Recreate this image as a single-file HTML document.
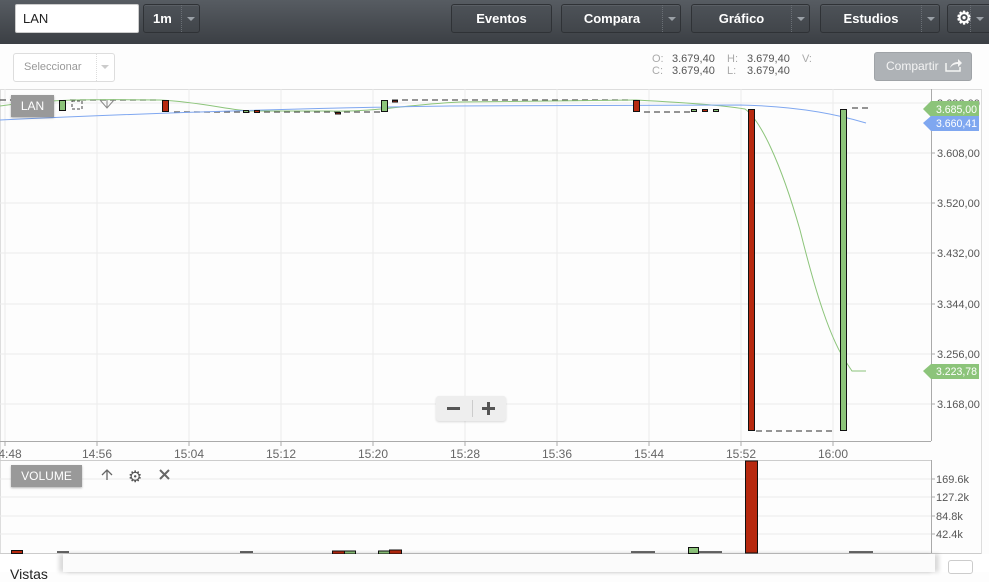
<!DOCTYPE html>
<html><head><meta charset="utf-8">
<style>
*{margin:0;padding:0;box-sizing:border-box}
body{width:989px;height:572px;overflow:hidden;background:#fdfdfd;font-family:"Liberation Sans",sans-serif;position:relative}
.hdr{position:absolute;left:0;top:0;width:989px;height:44px;background:linear-gradient(#575c62,#3b3f44)}
.btn{position:absolute;top:4px;height:29px;border:1px solid #2f3236;border-radius:3px;background:linear-gradient(#4d5258,#41454a);color:#fff;font-weight:bold;font-size:13px;line-height:27px;text-align:center;box-shadow:inset 0 1px 0 rgba(255,255,255,.08)}
.dd{position:absolute;right:0;top:0;width:18px;height:27px;border-left:1px dotted #6a6f75}
.dd:after{content:"";position:absolute;left:5px;top:12px;border:4px solid transparent;border-top:4px solid #9aa0a6}
.inp{position:absolute;left:15px;top:4px;width:124px;height:29px;background:#fff;border:1px solid #ccc;border-radius:2px;font-size:13px;line-height:27px;padding-left:7px;color:#222}
.sel{position:absolute;left:13px;top:53px;width:102px;height:29px;border:1px solid #ddd;border-radius:3px;background:#fff;color:#999;font-size:11px;line-height:27px;padding-left:10px}
.ohlc{position:absolute;left:652px;top:53px;font-size:11px;color:#555;line-height:12px}
.ohlc b{font-weight:normal;color:#aaa;display:inline-block}
.share{position:absolute;left:874px;top:52px;width:98px;height:29px;background:#aeb2b6;border:1px solid #9fa3a7;border-radius:3px;color:#f4f4f4;font-size:12px;line-height:27px;padding-left:11px}
.tag{position:absolute;background:#999;color:#fff;font-size:12px;}
</style></head><body>
<div class="hdr"></div>
<div class="inp">LAN</div>
<div class="btn" style="left:143px;width:57px;text-align:left;padding-left:9px">1m<div class="dd"></div></div>
<div class="btn" style="left:451px;width:101px">Eventos</div>
<div class="btn" style="left:561px;width:120px;padding-right:18px">Compara<div class="dd"></div></div>
<div class="btn" style="left:691px;width:119px;padding-right:18px">Gráfico<div class="dd"></div></div>
<div class="btn" style="left:820px;width:120px;padding-right:18px">Estudios<div class="dd"></div></div>
<div class="btn" style="left:947px;width:50px;text-align:left;padding-left:8px;font-size:18px">⚙<div class="dd" style="right:8px"></div></div>

<div class="sel">Seleccionar<div style="position:absolute;right:0;top:0;width:18px;height:27px;border-left:1px dotted #ddd"><div style="position:absolute;left:4px;top:11px;border:4px solid transparent;border-top:4px solid #ccc"></div></div></div>
<div class="ohlc"><b style="width:20px">O:</b><span style="display:inline-block;width:55px">3.679,40</span><b style="width:20px">H:</b><span style="display:inline-block;width:55px">3.679,40</span><b>V:</b><br><b style="width:20px">C:</b><span style="display:inline-block;width:55px">3.679,40</span><b style="width:20px">L:</b><span>3.679,40</span></div>
<div class="share">Compartir <svg width="18" height="14" style="vertical-align:-2px;margin-left:3px"><path d="M1 5V13H15V9" stroke="#f4f4f4" stroke-width="1.5" fill="none"/><path d="M5 10C6 6 9 4 13 4V1L17 5L13 9V6C10 6 7 7 5 10Z" fill="#f4f4f4"/></svg></div>

<svg style="position:absolute;left:0;top:0" width="989" height="572">
<g stroke="#ececec" stroke-width="1">
<rect x="0.5" y="89.5" width="981" height="464" fill="none" stroke="#ddd"/>
<line x1="5" y1="89" x2="5" y2="441"/><line x1="97" y1="89" x2="97" y2="441"/><line x1="189" y1="89" x2="189" y2="441"/><line x1="281" y1="89" x2="281" y2="441"/><line x1="373" y1="89" x2="373" y2="441"/><line x1="465" y1="89" x2="465" y2="441"/><line x1="557" y1="89" x2="557" y2="441"/><line x1="649" y1="89" x2="649" y2="441"/><line x1="741" y1="89" x2="741" y2="441"/><line x1="833" y1="89" x2="833" y2="441"/>
<line x1="0" y1="103" x2="931" y2="103"/><line x1="0" y1="153" x2="931" y2="153"/><line x1="0" y1="203" x2="931" y2="203"/><line x1="0" y1="253" x2="931" y2="253"/><line x1="0" y1="304" x2="931" y2="304"/><line x1="0" y1="354" x2="931" y2="354"/><line x1="0" y1="404" x2="931" y2="404"/>
<line x1="0" y1="479" x2="931" y2="479"/><line x1="0" y1="497" x2="931" y2="497"/><line x1="0" y1="516" x2="931" y2="516"/><line x1="0" y1="534" x2="931" y2="534"/>
</g>
<line x1="931.5" y1="89" x2="931.5" y2="441" stroke="#aaa"/>
<line x1="0" y1="441.5" x2="931" y2="441.5" stroke="#aaa"/>
<line x1="0" y1="460.5" x2="931" y2="460.5" stroke="#ccc"/>
<line x1="931.5" y1="460" x2="931.5" y2="553" stroke="#aaa"/>
<line x1="0" y1="553.5" x2="981" y2="553.5" stroke="#ccc"/>
<g stroke="#aaa"><line x1="5" y1="441" x2="5" y2="446"/><line x1="97" y1="441" x2="97" y2="446"/><line x1="189" y1="441" x2="189" y2="446"/><line x1="281" y1="441" x2="281" y2="446"/><line x1="373" y1="441" x2="373" y2="446"/><line x1="465" y1="441" x2="465" y2="446"/><line x1="557" y1="441" x2="557" y2="446"/><line x1="649" y1="441" x2="649" y2="446"/><line x1="741" y1="441" x2="741" y2="446"/><line x1="833" y1="441" x2="833" y2="446"/>
<line x1="931" y1="153" x2="935" y2="153"/><line x1="931" y1="203" x2="935" y2="203"/><line x1="931" y1="253" x2="935" y2="253"/><line x1="931" y1="304" x2="935" y2="304"/><line x1="931" y1="354" x2="935" y2="354"/><line x1="931" y1="404" x2="935" y2="404"/>
<line x1="931" y1="479" x2="935" y2="479"/><line x1="931" y1="497" x2="935" y2="497"/><line x1="931" y1="516" x2="935" y2="516"/><line x1="931" y1="534" x2="935" y2="534"/></g>
<g font-size="11" fill="#555" font-family="Liberation Sans">
<text x="937" y="107">3.696,00</text><text x="937" y="157">3.608,00</text><text x="937" y="207">3.520,00</text><text x="937" y="257">3.432,00</text><text x="937" y="308">3.344,00</text><text x="937" y="358">3.256,00</text><text x="937" y="408">3.168,00</text>
<text x="936" y="483">169.6k</text><text x="936" y="501">127.2k</text><text x="936" y="520">84.8k</text><text x="936" y="538">42.4k</text>
<g font-size="12" fill="#666" text-anchor="middle"><text x="10" y="458">4:48</text><text x="97" y="458">14:56</text><text x="189" y="458">15:04</text><text x="281" y="458">15:12</text><text x="373" y="458">15:20</text><text x="465" y="458">15:28</text><text x="557" y="458">15:36</text><text x="649" y="458">15:44</text><text x="741" y="458">15:52</text><text x="833" y="458">16:00</text></g>
</g>
<g stroke="#555" stroke-dasharray="6,4" stroke-width="1.3" fill="none">
<path d="M0 100H14M70 100H160M392 100H632"/><path d="M174 112H380M644 112H690M756 431H836M852 108H870"/>
</g>
<path d="M0 106 C40 100 80 99 160 100 C200 102 230 110 250 111 L330 111 C380 112 400 105 460 102 L636 100 C690 103 720 105 745 109 C760 120 780 160 800 230 C815 290 830 340 848 365 L852 371 H866" stroke="#8cc47a" fill="none" stroke-width="1"/>
<path d="M0 120 C150 113 300 108 450 106 L740 105 C790 106 830 112 866 123" stroke="#7fa7f0" fill="none" stroke-width="1"/>
<g stroke="#111" stroke-width="1">
<rect x="59.5" y="100.5" width="6" height="10" fill="#8cc47a"/>
<rect x="162.5" y="100.5" width="6" height="11" fill="#b7290f"/>
<rect x="243.5" y="110.5" width="5" height="2" fill="#8cc47a"/><rect x="254.5" y="110.5" width="5" height="2" fill="#b7290f"/>
<rect x="335.5" y="112.5" width="5" height="1.5" fill="#b7290f"/>
<rect x="381.5" y="100.5" width="6" height="11" fill="#8cc47a"/><rect x="392.5" y="100.5" width="5" height="1.5" fill="#b7290f"/>
<rect x="633.5" y="100.5" width="6" height="11" fill="#b7290f"/>
<rect x="691.5" y="109.5" width="5" height="2" fill="#8cc47a"/><rect x="702.5" y="109.5" width="5" height="2" fill="#b7290f"/><rect x="713.5" y="109.5" width="5" height="2" fill="#8cc47a"/>
<rect x="748.5" y="109.5" width="6" height="321" fill="#b7290f"/>
<rect x="840.5" y="109.5" width="6" height="321" fill="#8cc47a"/>
<rect x="745.5" y="461" width="12" height="92" fill="#b7290f"/>
<rect x="688.5" y="547.5" width="10" height="6" fill="#8cc47a"/>
<rect x="11.5" y="550.5" width="11" height="3" fill="#b7290f"/>
<rect x="332.5" y="551" width="12" height="3" fill="#b7290f"/><rect x="344.5" y="551" width="11" height="3" fill="#8cc47a"/>
<rect x="378.5" y="551" width="11" height="3" fill="#8cc47a"/><rect x="389.5" y="550" width="12" height="4" fill="#b7290f"/>
</g>
<g stroke="#111" stroke-width="1.3"><line x1="57" y1="552" x2="69" y2="552"/><line x1="240" y1="552" x2="253" y2="552"/><line x1="631" y1="552" x2="655" y2="552"/><line x1="699" y1="552" x2="722" y2="552"/><line x1="849" y1="552" x2="873" y2="552"/></g>
<path d="M100 100 L107 108 L114 100 M107 100V108" stroke="#888" fill="none"/>
<rect x="72" y="101" width="10" height="8" fill="none" stroke="#444" stroke-dasharray="3,2"/>
<g stroke="#666" fill="none" stroke-width="1.3"><path d="M107 480V470M102 475L107 470L112 475"/><path d="M160 470L169 479M169 470L160 479" stroke-width="2"/></g>
<text x="128" y="482" font-size="16" fill="#555">⚙</text>
<g font-size="11" fill="#fff" font-family="Liberation Sans">
<path d="M923 109 L931 101 H979 V117 H931Z" fill="#8cc47a"/><text x="936" y="113" textLength="41" lengthAdjust="spacingAndGlyphs">3.685,00</text>
<path d="M923 123 L931 116 H979 V131 H931Z" fill="#7fa7f0"/><text x="936" y="127" textLength="41" lengthAdjust="spacingAndGlyphs">3.660,41</text>
<path d="M923 371 L931 364 H979 V379 H931Z" fill="#8cc47a"/><text x="936" y="375" textLength="41" lengthAdjust="spacingAndGlyphs">3.223,78</text>
</g>
</svg>
<div class="tag" style="left:11px;top:95px;width:43px;height:22px;line-height:22px;text-align:center;box-shadow:0 1px 2px rgba(0,0,0,.3)">LAN</div>
<div class="tag" style="left:11px;top:465px;width:71px;height:22px;line-height:22px;text-align:center;box-shadow:0 1px 2px rgba(0,0,0,.3)">VOLUME</div>
<div style="position:absolute;left:436px;top:396px;width:70px;height:25px;background:#eee;border-radius:3px;box-shadow:0 1px 2px rgba(0,0,0,.15)">
<div style="position:absolute;left:11px;top:11px;width:13px;height:3px;background:#555"></div>
<div style="position:absolute;left:36px;top:4px;width:1px;height:17px;background:#ccc"></div>
<div style="position:absolute;left:46px;top:11px;width:13px;height:3px;background:#555"></div>
<div style="position:absolute;left:51px;top:6px;width:3px;height:13px;background:#555"></div>
</div>
<div style="position:absolute;left:0;top:554px;width:989px;height:18px;background:#fff"></div>
<div style="position:absolute;left:10px;top:566px;font-size:14px;color:#222">Vistas</div>
<div style="position:absolute;left:63px;top:554px;width:872px;height:18px;background:#fbfbfb;box-shadow:-4px 0 4px rgba(0,0,0,.15),4px 0 4px rgba(0,0,0,.15)"></div>
<div style="position:absolute;left:948px;top:560px;width:25px;height:14px;border:1px solid #ccc;border-radius:3px;background:#fff"></div>
</body></html>
